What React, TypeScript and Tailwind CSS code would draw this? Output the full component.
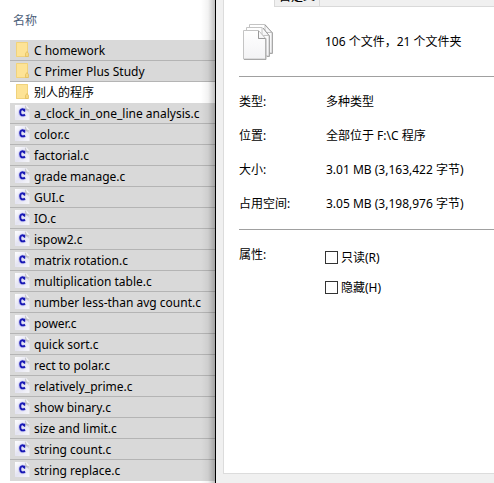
const files: { name: string; folder?: boolean; plain?: boolean }[] = [
  { name: "C homework", folder: true },
  { name: "C Primer Plus Study", folder: true },
  { name: "别人的程序", folder: true, plain: true },
  { name: "a_clock_in_one_line analysis.c" },
  { name: "color.c" },
  { name: "factorial.c" },
  { name: "grade manage.c" },
  { name: "GUI.c" },
  { name: "IO.c" },
  { name: "ispow2.c" },
  { name: "matrix rotation.c" },
  { name: "multiplication table.c" },
  { name: "number less-than avg count.c" },
  { name: "power.c" },
  { name: "quick sort.c" },
  { name: "rect to polar.c" },
  { name: "relatively_prime.c" },
  { name: "show binary.c" },
  { name: "size and limit.c" },
  { name: "string count.c" },
  { name: "string replace.c" },
];

const details = [
  ["类型:", "多种类型"],
  ["位置:", "全部位于 F:\\C 程序"],
  ["大小:", "3.01 MB (3,163,422 字节)"],
  ["占用空间:", "3.05 MB (3,198,976 字节)"],
];

function FolderIcon() {
  return (
    <svg width="16" height="18" viewBox="0 0 16 18" className="shrink-0" aria-hidden="true">
      <path d="M2 1h12v15H2z" fill="#fbdf8a" />
      <path d="M2.500 1.500h11v14h-11z" fill="#fde396" stroke="#f0d27c" />
      <path d="M11.500 15.500v-3l1.500-2 1.500 2v3z" fill="#f8d980" stroke="#dfba5a" strokeWidth=".7" />
    </svg>
  );
}

function CFileIcon() {
  return (
    <svg width="16" height="16" viewBox="0 0 16 16" className="shrink-0" aria-hidden="true">
      <defs>
        <linearGradient id="sheet" x1="0" y1="0" x2="1" y2="1">
          <stop offset="0" stopColor="#ffffff" />
          <stop offset=".5" stopColor="#e4e4f2" />
          <stop offset="1" stopColor="#f6f6fa" />
        </linearGradient>
        <linearGradient id="fold" x1="0" y1="0" x2="1" y2="1">
          <stop offset="0" stopColor="#a0a0a4" />
          <stop offset="1" stopColor="#e8e8ea" />
        </linearGradient>
      </defs>
      <path d="M1 0h11l3.500 4v11H1z" fill="url(#sheet)" />
      <path d="M11.500 .5l4 4v5q-1-4-4-4.500z" fill="url(#fold)" />
      <path d="M12 0l3.500 4-3-.6z" fill="#fafafa" />
      <path d="M10.500 6C9.500 3.500 6 3.700 6 7.300c0 3.600 3 3.900 5 2.300" fill="none" stroke="#b0b0f4" strokeWidth="3.400" opacity=".5" />
      <path d="M10.300 5.800C9.300 3.500 6.200 3.700 6.200 7.200c0 3.500 2.800 3.800 4.800 2.400" fill="none" stroke="#1818b4" strokeWidth="1.900" />
      <path d="M9.800 3.800h1.400v2.900H10z" fill="#1818b4" />
    </svg>
  );
}

function FilesIcon() {
  return (
    <svg width="32" height="38" viewBox="0 0 32 38" className="shrink-0" aria-hidden="true">
      <defs>
        <linearGradient id="paper" x1="0" y1="0" x2="0" y2="1">
          <stop offset="0" stopColor="#ffffff" />
          <stop offset="1" stopColor="#f3f3f5" />
        </linearGradient>
      </defs>
      <g fill="url(#paper)" stroke="#c4c4c4" strokeLinejoin="round">
        <path d="M7.500 1.500h15.500l7 8v20.500H7.500z" />
        <path d="M23 1.500v8h7" />
        <path d="M4.500 4.500h15.500l7 8v20.500H4.500z" />
        <path d="M20 4.500v8h7" />
        <path d="M1.500 7.500h15l7 8v20.500h-22z" />
        <path d="M16.500 7.500v8h7z" />
      </g>
      <path d="M16.500 8v7.500h7M21 5l6 7.500M23 2l7 7.500" fill="none" stroke="#999" />
      <path d="M2 36.500h22v-21M25 33.500h2.500v-21M28 30.500h2.500v-21" fill="none" stroke="#999" strokeWidth=".8" />
    </svg>
  );
}

function Attribute({ label }: { label: string }) {
  return (
    <label className="flex h-[30px] items-center gap-[3px]">
      <input type="checkbox" className="size-[13px] shrink-0 appearance-none border border-[#333] bg-white checked:bg-[#333]" />
      <span className="pt-px">{label}</span>
    </label>
  );
}

export default function App() {
  return (
    <main className="flex min-h-screen overflow-hidden bg-white font-['Noto_Sans','Noto_Sans_CJK_SC',sans-serif] text-[12px] leading-[20px] text-black">
      <section className="relative w-[215px] shrink-0 pl-[10px]">
        <h1 className="flex h-[40px] items-center pt-px pl-[3px] text-[#4c607a]">名称</h1>
        <ul>
          {files.map((file) => (
            <li
              key={file.name}
              className={
                file.plain
                  ? "flex h-[21px] items-center gap-1 border-b border-white bg-white pl-1"
                  : "flex h-[21px] items-center gap-1 border-b border-[#b4b4b4] bg-[#d9d9d9] pl-1 last:border-[#d9d9d9]"
              }
            >
              {file.folder ? <FolderIcon /> : <CFileIcon />}
              <span className="whitespace-nowrap pt-[2px]">{file.name}</span>
            </li>
          ))}
        </ul>
        <div className="absolute inset-y-0 right-0 w-[14px] bg-linear-to-r from-transparent via-black/5 to-black/25" />
      </section>
      <section className="flex min-w-0 flex-1 flex-col border-l border-black bg-[#f0f0f0] pb-[9px] pl-[7px]">
        <div className="flex flex-1 flex-col border-b border-l border-[#dcdcdc] bg-white">
          <div className="flex h-[7px] items-end overflow-hidden pl-[50px]">
            <div className="border-b border-l border-[#d9d9d9] bg-[#f0f0f0] px-1 leading-[18px]">自定义</div>
            <div className="h-[7px] flex-1 border-b border-l border-[#d9d9d9] bg-[#f0f0f0]" />
          </div>
          <div className="pl-[15px]">
            <div className="flex h-[70px] items-center border-b border-[#a0a0a0]">
              <div className="w-[86px] shrink-0 pl-[3px]"><FilesIcon /></div>
              <p>106 个文件，21 个文件夹</p>
            </div>
            <dl className="border-b border-[#a0a0a0] py-2">
              {details.map(([name, value]) => (
                <div key={name} className="flex h-[34px] items-center">
                  <dt className="w-[87px] shrink-0">{name}</dt>
                  <dd className="whitespace-nowrap">{value}</dd>
                </div>
              ))}
            </dl>
            <fieldset className="flex pt-[12px]">
              <legend className="float-left w-[86px] pt-[3px]">属性:</legend>
              <div>
                <Attribute label="只读(R)" />
                <Attribute label="隐藏(H)" />
              </div>
            </fieldset>
          </div>
        </div>
      </section>
    </main>
  );
}
